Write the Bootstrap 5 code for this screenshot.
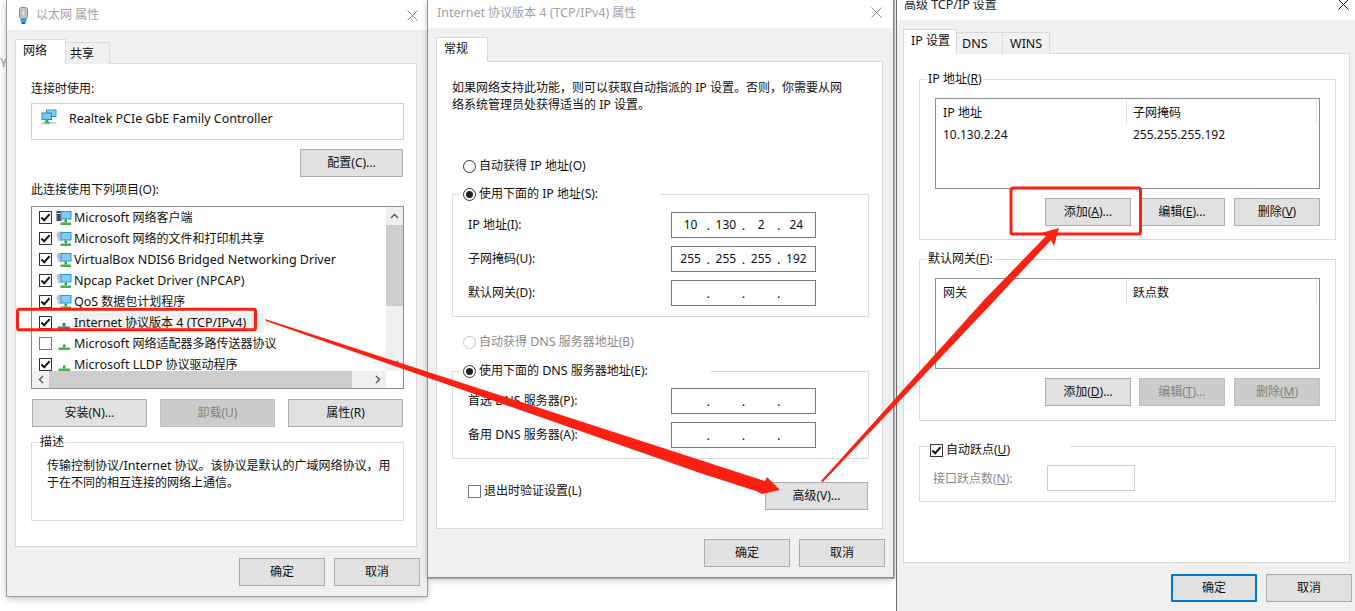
<!DOCTYPE html>
<html lang="zh-CN">
<head>
  <meta charset="UTF-8">
  <meta name="viewport" content="width=device-width, initial-scale=1.0">
  <title>Advanced TCP/IP settings</title>
  <link href="https://cdn.jsdelivr.net/npm/bootstrap@5.3.0/dist/css/bootstrap.min.css" rel="stylesheet">
  <style>
    html, body { height: 611px; overflow: hidden; }
    body {
      position: relative;
      background: #fff;
      color: #111;
      font-family: "Noto Sans", "Noto Sans CJK SC", sans-serif;
      font-size: 12px;
      line-height: 18px;
    }
    .la { font-size: 12.5px; }
    .stray { position: absolute; left: -7px; top: 53px; color: #999; font-size: 13px; }

    /* windows on the desktop */
    .dlg { position: absolute; display: flex; flex-direction: column; background: #f0f0f0; overflow: hidden; }
    #win1 { left: 7px; top: 0; width: 420px; height: 596px; box-shadow: 0 0 0 1px #9a9a9a, 0 2px 7px rgba(0,0,0,.3); }
    #win2 { left: 428px; top: 0; width: 465px; height: 577px; box-shadow: 0 0 0 1px #8f8f8f, 1px 1px 0 1px #a8a8a8, 0 2px 7px rgba(0,0,0,.3); }
    #win3 { left: 896px; top: -8px; width: 459px; height: 619px; border-left: 1px solid #6d6d6d; }

    .ttl { display: flex; align-items: center; height: 28px; flex: none; background: #fff; color: #a2a2a2; padding: 0 9px 3px; }
    #win1 .ttl { height: 30px; padding: 0 9px 0 12px; }
    #win3 .ttl { color: #222; padding: 0 9px 2px 7px; }
    .ttl svg.tic { margin-right: 8px; }
    .ttl .xbtn { margin-left: auto; margin-right: 2px; }
    #win1 .ttl .xbtn { margin-right: 0; }
    #win3 .ttl .xbtn { margin-right: -3px; margin-top: -2px; }
    .bodyw { flex: 1 1 auto; display: flex; flex-direction: column; min-height: 0; padding: 9px 0 0 8px; }
    #win3 .bodyw { padding-left: 6px; }

    /* tabs */
    .tabs.nav-tabs { border: 0; align-items: flex-end; margin-bottom: -1px; position: relative; z-index: 1; flex: none; }
    .tabs .nav-link {
      display: block; height: 22px; margin: 0; padding: 0 0 0 4px; border: 1px solid #d9d9d9; border-bottom: 0; border-radius: 0;
      background: #f0f0f0; color: #111; line-height: 21px; font-size: 12px;
    }
    .tabs .nav-link.active { height: 25px; padding-left: 7px; background: #fff; color: #111; border-color: #d9d9d9; line-height: 22px; }
    .t44 { width: 44px; } .t46 { width: 46px; } .t47 { width: 47px; } .t51 { width: 51px; } .t52 { width: 52px; } .t54 { width: 54px; }
    .tabs .nav-item + .nav-item .nav-link { border-left: 0; }
    .tabs .nav-link.t46 { padding-left: 5px; }
    .tabs .nav-link.t47 { padding-left: 7px; }

    .pane { background: #fff; border: 1px solid #d9d9d9; padding-left: 15px; flex: none; }
    #win1 .pane { width: 402px; height: 484px; padding-top: 16px; }
    #win2 .pane { width: 447px; height: 468px; padding-top: 17px; }
    #win3 .pane { width: 447px; height: 510px; padding-top: 25px; }
    .foot { display: flex; justify-content: flex-end; gap: 9px; padding-top: 11px; padding-right: 7px; }
    #win2 .foot { padding: 10px 8px 0 0; }
    #win3 .foot { padding-right: 3px; }

    /* buttons */
    .wbtn {
      width: 86px; height: 28px; padding: 0; border-radius: 0; font-size: 12px; line-height: 24px;
      background: #e1e1e1; border: 1.5px solid #adadad; color: #111;
    }
    .wbtn.w103 { width: 103px; }
    .wbtn.w115 { width: 115px; }
    .wbtn:disabled { background: #ccc; border-color: #bfbfbf; color: #838383; opacity: 1; }
    .wbtn.dflt { border: 2px solid #0078d7; }

    /* group box */
    .grp { position: relative; border: 1px solid #dcdcdc; }
    .lg { position: absolute; left: 7px; top: -11px; background: #fff; padding: 0 1px; display: flex; align-items: center; height: 18px; }
    .gp1 .lg, .gp2 .lg { top: -10px; }
    .lgw1 { width: 200px; left: 7px; top: -10px; padding-left: 3px; }
    .lgw2 { width: 250px; left: 7px; top: -10px; padding-left: 3px; }
    .lgw3 { width: 140px; left: 10px; top: -7px; height: 20px; padding: 0; background: transparent; }
    .lgw3::before { content: ""; position: absolute; left: 0; top: 0; width: 140px; height: 7px; background: #fff; z-index: -1; }

    /* check and radio */
    .chk, .rad { display: inline-block; position: relative; flex: none; width: 13px; height: 13px; background: #fff; }
    .chk { border: 1px solid #333; }
    .chk.off { border-color: #777; }
    .chk.on::after {
      content: ""; position: absolute; left: 3px; top: 0; width: 5px; height: 9px;
      border: solid #111; border-width: 0 2px 2px 0; transform: rotate(42deg);
    }
    .rad { border: 1px solid #333; border-radius: 50%; }
    .rad.on::after { content: ""; position: absolute; left: 2px; top: 2px; width: 7px; height: 7px; border-radius: 50%; background: #222; }
    .rad.dis { border-color: #c4c4c4; }
    .dim { color: #8a8a8a; }
    .rw { display: flex; align-items: center; gap: 3px; height: 18px; }

    /* window 1 */
    .adapter { display: flex; align-items: flex-start; height: 37px; margin-top: 5px; width: 373px; border: 1px solid #d0d0d0; padding: 5px 0 0 9px; }
    .adapter span.nm { margin: 1px 0 0 12px; line-height: 18px; }
    .cfg { display: flex; justify-content: flex-end; width: 372px; margin-top: 9px; }
    .lbl2 { margin-top: 4px; }
    .lst { width: 373px; height: 183px; margin-top: 7px; border: 1px solid #8b8b8b; }
    .lst-top { display: flex; height: 164px; }
    .rows { flex: 1 1 auto; overflow: hidden; }
    .itm { display: flex; align-items: center; height: 21px; padding-left: 7px; white-space: nowrap; }
    .itm .chk { margin-right: 4px; }
    .itm svg { flex: none; margin-right: 2px; }
    .itm .tx { height: 20px; line-height: 20px; padding-right: 18px; }
    .itm .tx.sel { background: #f0f0f0; }
    .vs { flex: none; width: 17px; background: #f0f0f0; display: flex; flex-direction: column; align-items: center; }
    .vs .th { width: 100%; height: 81px; margin-top: 1px; background: #cdcdcd; }
    .vs svg, .hs svg { flex: none; }
    .vs .ar { height: 17px; display: flex; align-items: center; }
    .vs .ar.dn { margin-top: auto; }
    .hs { display: flex; align-items: center; height: 17px; background: #f0f0f0; margin-right: 17px; }
    .hs .ar { width: 17px; display: flex; justify-content: center; flex: none; }
    .hs .th { width: 303px; height: 17px; background: #cdcdcd; }
    .hs .ar.rt { margin-left: auto; }
    .acts { display: flex; justify-content: space-between; width: 371px; margin: 10px 0 0 1px; }
    .descr { width: 373px; height: 79px; margin-top: 15px; padding: 14px 10px 0 15px; line-height: 17px; }

    /* window 2 */
    .intro { width: 396px; line-height: 17px; }
    .r1 { margin: 44px 0 0 11px; }
    .g1 { width: 417px; height: 123px; margin-top: 19px; padding: 17px 52px 0 15px; }
    .r3 { margin: 16px 0 0 11px; }
    .g2 { width: 417px; height: 88px; margin-top: 20px; padding: 16px 52px 0 15px; }
    .frow { display: flex; align-items: center; justify-content: space-between; height: 26px; margin-bottom: 8px; }
    .ipf { display: flex; align-items: center; width: 145px; height: 26px; border: 1px solid #7a7a7a; padding: 0 1px; background: #fff; }
    .oc { flex: 1 1 0; text-align: center; font-size: 12px; }
    .dt { width: 0; display: flex; justify-content: center; font-style: normal; font-size: 13px; }
    .bottom { display: flex; justify-content: space-between; align-items: flex-start; width: 400px; margin: 23px 0 0 16px; }

    /* window 3 */
    .gp { width: 417px; padding: 18px 15px 0; }
    .gp1 { height: 161px; }
    .gp2 { height: 162px; margin-top: 19px; }
    .gp3 { height: 56px; margin-top: 25px; padding: 18px 0 0 13px; isolation: isolate; }
    .tbl { height: 91px; border: 1px solid #8a8f94; padding: 0 0 0 7px; }
    .tbl-h { display: flex; height: 26px; line-height: 27px; }
    .tbl-h div:first-child, .tbl-r div:first-child { width: 183px; }
    .tbl-h div + div { border-left: 1px solid #e5e5e5; border-right: 1px solid #e5e5e5; padding-left: 6px; width: 191px; }
    .tbl-r { display: flex; height: 20px; line-height: 20px; font-size: 12px; }
    .tbl-r div + div { padding-left: 7px; }
    .btns { display: flex; justify-content: flex-end; gap: 8px; margin-top: 9px; }
    .btns .wbtn:last-child { margin-left: 1px; }
    .hop { display: flex; align-items: center; }
    .hop .inp { width: 88px; height: 26px; margin-left: auto; margin-right: 200px; border: 1px solid #ccc; }
    .hop .cap { width: 114px; padding-top: 1px; }

    /* annotations drawn on top */
    .marks { position: absolute; left: 0; top: 0; width: 1355px; height: 611px; pointer-events: none; z-index: 10; }
  </style>
</head>
<body>
<svg width="0" height="0" class="d-block position-absolute">
  <defs>
    <symbol id="base" viewBox="0 0 16 16"><path d="M7 8.500h2.500v3H7z" fill="#2f9e45"/><path d="M2.500 11.500h11.500V14H2.500z" fill="#48b34c"/></symbol>
    <symbol id="baset" viewBox="0 0 16 16"><path d="M6.500 8h3v3.500h-3z" fill="#1e8a8a"/><path d="M1.500 11.500h12.500V14H1.500z" fill="#28918f"/></symbol>
    <symbol id="pc" viewBox="0 0 16 16">
      <circle cx="4" cy="4" r="3.500" fill="#b9c2c8"/><circle cx="4" cy="8" r="2.500" fill="#c6cdd2"/>
      <rect x="4.500" y="1" width="11" height="8.500" fill="#2c8fd8"/><rect x="5.500" y="2" width="9" height="6.500" fill="#7fd0f7"/>
      <path d="M8.500 9.500H11v3H8.500z" fill="#2f9e45"/><path d="M4.500 12.500H15V15H4.500z" fill="#48b34c"/>
    </symbol>
    <symbol id="srv" viewBox="0 0 16 16">
      <rect x="0.500" y="1" width="5" height="10" fill="#4a4f55"/><rect x="1" y="3" width="4" height="1" fill="#d8d8d8"/>
      <rect x="4.500" y="1" width="11" height="8.500" fill="#2c8fd8"/><rect x="5.500" y="2" width="9" height="6.500" fill="#7fd0f7"/>
      <path d="M8.500 9.500H11v3H8.500z" fill="#2f9e45"/><path d="M4.500 12.500H15V15H4.500z" fill="#48b34c"/>
    </symbol>
  </defs>
</svg>

<div class="stray">kY</div>

<!-- 以太网 属性 -->
<section class="dlg" id="win1">
  <div class="ttl">
    <svg class="tic" width="9" height="17" viewBox="0 0 9 17"><rect x="0.500" y="0.500" width="8" height="11" rx="2" fill="#c5ccd2" stroke="#7f8a94"/><rect x="3" y="3" width="3" height="6" fill="#eef1f3" stroke="#7f8a94" stroke-width=".6"/><rect x="1.500" y="11.500" width="6" height="3" fill="#3a97db"/><rect x="2.500" y="14.500" width="4" height="2.500" fill="#1c6fb5"/></svg>
    <span>以太网 属性</span>
    <svg class="xbtn" width="11" height="11" viewBox="0 0 11 11"><path d="M.5.500l10 10m0-10l-10 10" stroke="#8a8a8a" fill="none"/></svg>
  </div>
  <div class="bodyw">
    <ul class="nav nav-tabs tabs">
      <li class="nav-item"><a class="nav-link active t51" href="#">网络</a></li>
      <li class="nav-item"><a class="nav-link t44" href="#">共享</a></li>
    </ul>
    <div class="pane">
      <div>连接时使用:</div>
      <div class="adapter">
        <svg width="16" height="16" viewBox="0 0 16 16"><rect x="5" y="0.500" width="10.500" height="7.500" fill="#2f8fd6"/><rect x="6" y="1.500" width="8.500" height="5.500" fill="#8bd3f5"/><rect x="0.500" y="3.500" width="10.500" height="7.500" fill="#2a86cf"/><rect x="1.500" y="4.500" width="8.500" height="5.500" fill="#7cc9f2"/><path d="M4.500 11h3v2h-3z" fill="#3da34a"/><path d="M0 13h15.500v2.500H0z" fill="#d5d8d5"/><path d="M3 13h6v1.500H3z" fill="#48b34c"/></svg>
        <span class="nm la">Realtek PCIe GbE Family Controller</span>
      </div>
      <div class="cfg"><button type="button" class="btn wbtn w103">配置(C)...</button></div>
      <div class="lbl2">此连接使用下列项目(O):</div>
      <div class="lst">
        <div class="lst-top">
          <div class="rows">
            <div class="itm"><span class="chk on"></span><svg width="16" height="16"><use href="#srv"/></svg><span class="tx"><span class="la">Microsoft</span> 网络客户端</span></div>
            <div class="itm"><span class="chk on"></span><svg width="16" height="16"><use href="#pc"/></svg><span class="tx"><span class="la">Microsoft</span> 网络的文件和打印机共享</span></div>
            <div class="itm"><span class="chk on"></span><svg width="16" height="16"><use href="#pc"/></svg><span class="tx"><span class="la">VirtualBox NDIS6 Bridged Networking Driver</span></span></div>
            <div class="itm"><span class="chk on"></span><svg width="16" height="16"><use href="#pc"/></svg><span class="tx"><span class="la">Npcap Packet Driver (NPCAP)</span></span></div>
            <div class="itm"><span class="chk on"></span><svg width="16" height="16"><use href="#pc"/></svg><span class="tx"><span class="la">QoS</span> 数据包计划程序</span></div>
            <div class="itm"><span class="chk on"></span><svg width="16" height="16"><use href="#baset"/></svg><span class="tx sel"><span class="la">Internet</span> 协议版本 <span class="la">4 (TCP/IPv4)</span></span></div>
            <div class="itm"><span class="chk off"></span><svg width="16" height="16"><use href="#base"/></svg><span class="tx"><span class="la">Microsoft</span> 网络适配器多路传送器协议</span></div>
            <div class="itm"><span class="chk on"></span><svg width="16" height="16"><use href="#base"/></svg><span class="tx"><span class="la">Microsoft LLDP</span> 协议驱动程序</span></div>
          </div>
          <div class="vs">
            <div class="ar"><svg width="9" height="6" viewBox="0 0 9 6"><path d="M1 5l3.500-3.500L8 5" stroke="#606060" stroke-width="1.500" fill="none"/></svg></div>
            <div class="th"></div>
            <div class="ar dn"><svg width="9" height="6" viewBox="0 0 9 6"><path d="M1 1l3.500 3.500L8 1" stroke="#606060" stroke-width="1.500" fill="none"/></svg></div>
          </div>
        </div>
        <div class="hs">
          <div class="ar"><svg width="6" height="9" viewBox="0 0 6 9"><path d="M5 1L1.500 4.500 5 8" stroke="#606060" stroke-width="1.500" fill="none"/></svg></div>
          <div class="th"></div>
          <div class="ar rt"><svg width="6" height="9" viewBox="0 0 6 9"><path d="M1 1l3.500 3.500L1 8" stroke="#606060" stroke-width="1.500" fill="none"/></svg></div>
        </div>
      </div>
      <div class="acts">
        <button type="button" class="btn wbtn w115">安装(N)...</button>
        <button type="button" class="btn wbtn w115" disabled>卸载(U)</button>
        <button type="button" class="btn wbtn w115">属性(R)</button>
      </div>
      <div class="grp descr">
        <span class="lg">描述</span>
        传输控制协议/<span class="la">Internet</span> 协议。该协议是默认的广域网络协议，用于在不同的相互连接的网络上通信。
      </div>
    </div>
    <div class="foot">
      <button type="button" class="btn wbtn">确定</button>
      <button type="button" class="btn wbtn">取消</button>
    </div>
  </div>
</section>

<!-- IPv4 属性 -->
<section class="dlg" id="win2">
  <div class="ttl">
    <span><span class="la">Internet</span> 协议版本 <span class="la">4 (TCP/IPv4)</span> 属性</span>
    <svg class="xbtn" width="11" height="11" viewBox="0 0 11 11"><path d="M.5.500l10 10m0-10l-10 10" stroke="#8a8a8a" fill="none"/></svg>
  </div>
  <div class="bodyw">
    <ul class="nav nav-tabs tabs">
      <li class="nav-item"><a class="nav-link active t52" href="#">常规</a></li>
    </ul>
    <div class="pane">
      <div class="intro">如果网络支持此功能，则可以获取自动指派的 <span class="la">IP</span> 设置。否则，你需要从网络系统管理员处获得适当的 <span class="la">IP</span> 设置。</div>
      <div class="rw r1"><span class="rad"></span><span>自动获得 <span class="la">IP</span> 地址(O)</span></div>
      <div class="grp g1">
        <div class="lg lgw1"><div class="rw"><span class="rad on"></span><span>使用下面的 <span class="la">IP</span> 地址(S):</span></div></div>
        <div class="frow"><span><span class="la">IP</span> 地址(I):</span>
          <div class="ipf"><span class="oc">10</span><i class="dt">.</i><span class="oc">130</span><i class="dt">.</i><span class="oc">2</span><i class="dt">.</i><span class="oc">24</span></div></div>
        <div class="frow"><span>子网掩码(U):</span>
          <div class="ipf"><span class="oc">255</span><i class="dt">.</i><span class="oc">255</span><i class="dt">.</i><span class="oc">255</span><i class="dt">.</i><span class="oc">192</span></div></div>
        <div class="frow"><span>默认网关(D):</span>
          <div class="ipf"><span class="oc"></span><i class="dt">.</i><span class="oc"></span><i class="dt">.</i><span class="oc"></span><i class="dt">.</i><span class="oc"></span></div></div>
      </div>
      <div class="rw r3 dim"><span class="rad dis"></span><span>自动获得 <span class="la">DNS</span> 服务器地址(B)</span></div>
      <div class="grp g2">
        <div class="lg lgw2"><div class="rw"><span class="rad on"></span><span>使用下面的 <span class="la">DNS</span> 服务器地址(E):</span></div></div>
        <div class="frow"><span>首选 <span class="la">DNS</span> 服务器(P):</span>
          <div class="ipf"><span class="oc"></span><i class="dt">.</i><span class="oc"></span><i class="dt">.</i><span class="oc"></span><i class="dt">.</i><span class="oc"></span></div></div>
        <div class="frow"><span>备用 <span class="la">DNS</span> 服务器(A):</span>
          <div class="ipf"><span class="oc"></span><i class="dt">.</i><span class="oc"></span><i class="dt">.</i><span class="oc"></span><i class="dt">.</i><span class="oc"></span></div></div>
      </div>
      <div class="bottom">
        <div class="rw"><span class="chk off"></span><span>退出时验证设置(L)</span></div>
        <button type="button" class="btn wbtn w103">高级(V)...</button>
      </div>
    </div>
    <div class="foot">
      <button type="button" class="btn wbtn">确定</button>
      <button type="button" class="btn wbtn">取消</button>
    </div>
  </div>
</section>

<!-- 高级 TCP/IP 设置 -->
<section class="dlg" id="win3">
  <div class="ttl">
    <span>高级 <span class="la">TCP/IP</span> 设置</span>
    <svg class="xbtn" width="11" height="11" viewBox="0 0 11 11"><path d="M.5.500l10 10m0-10l-10 10" stroke="#111" fill="none"/></svg>
  </div>
  <div class="bodyw">
    <ul class="nav nav-tabs tabs">
      <li class="nav-item"><a class="nav-link active t54" href="#"><span class="la">IP</span> 设置</a></li>
      <li class="nav-item"><a class="nav-link t46" href="#"><span class="la">DNS</span></a></li>
      <li class="nav-item"><a class="nav-link t47" href="#"><span class="la">WINS</span></a></li>
    </ul>
    <div class="pane">
      <div class="grp gp gp1">
        <span class="lg"><span><span class="la">IP</span> 地址(<u>R</u>)</span></span>
        <div class="tbl">
          <div class="tbl-h"><div><span class="la">IP</span> 地址</div><div>子网掩码</div></div>
          <div class="tbl-r"><div>10.130.2.24</div><div>255.255.255.192</div></div>
        </div>
        <div class="btns">
          <button type="button" class="btn wbtn">添加(<u>A</u>)...</button>
          <button type="button" class="btn wbtn">编辑(<u>E</u>)...</button>
          <button type="button" class="btn wbtn">删除(<u>V</u>)</button>
        </div>
      </div>
      <div class="grp gp gp2">
        <span class="lg"><span>默认网关(<u>F</u>):</span></span>
        <div class="tbl">
          <div class="tbl-h"><div>网关</div><div>跃点数</div></div>
        </div>
        <div class="btns">
          <button type="button" class="btn wbtn">添加(<u>D</u>)...</button>
          <button type="button" class="btn wbtn" disabled>编辑(<u>T</u>)...</button>
          <button type="button" class="btn wbtn" disabled>删除(<u>M</u>)</button>
        </div>
      </div>
      <div class="grp gp gp3">
        <div class="lg lgw3"><div class="rw"><span class="chk on"></span><span>自动跃点(<u>U</u>)</span></div></div>
        <div class="hop"><span class="cap dim">接口跃点数(<u>N</u>):</span><div class="inp"></div></div>
      </div>
    </div>
    <div class="foot">
      <button type="button" class="btn wbtn dflt">确定</button>
      <button type="button" class="btn wbtn">取消</button>
    </div>
  </div>
</section>

<!-- red annotations -->
<svg class="marks" viewBox="0 0 1355 611">
  <rect x="17.500" y="309.200" width="238" height="20.500" rx="2" fill="none" stroke="#fb2012" stroke-width="3"/>
  <rect x="1011" y="188" width="129.500" height="46" rx="2" fill="none" stroke="#fb2012" stroke-width="3"/>
  <polygon fill="#fb2012" points="265,319 700,460 765,481 767,477 780,490 762,494 756,491 700,473 266,321"/>
  <polygon fill="#fb2012" points="821,481 984,300 1046,236 1041,233 1059,228 1054,246 1051,240 995,300 823,482"/>
</svg>

<script src="https://cdn.jsdelivr.net/npm/bootstrap@5.3.0/dist/js/bootstrap.bundle.min.js"></script>
</body>
</html>
